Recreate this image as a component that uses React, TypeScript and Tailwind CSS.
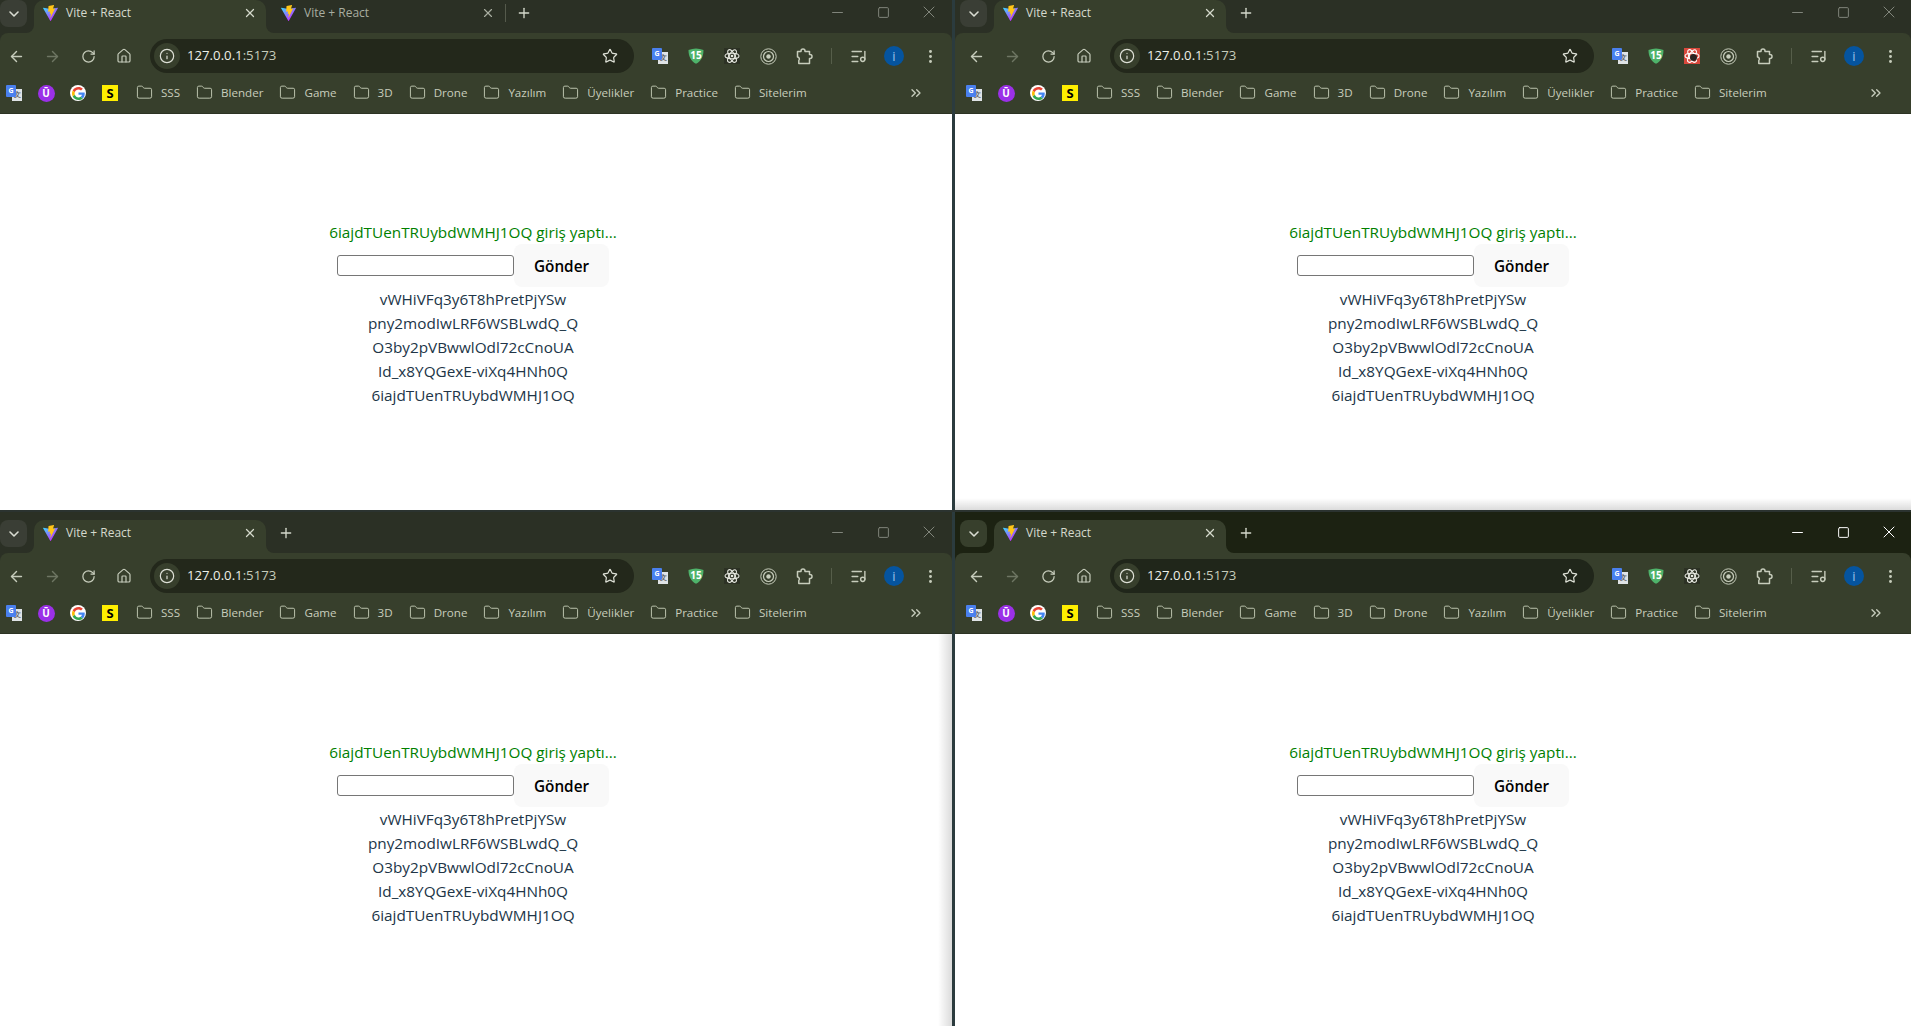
import React from 'react';
import {
    ArrowLeft,
    ArrowRight,
    ChevronDown,
    ChevronsRight,
    Folder,
    House,
    Info,
    ListMusic,
    Minus,
    MoreVertical,
    Plus,
    RotateCw,
    Square,
    Star,
    X,
} from 'lucide-react';

const bookmarks = ['SSS', 'Blender', 'Game', '3D', 'Drone', 'Yazılım', 'Üyelikler', 'Practice', 'Sitelerim'];
const users = [
    'vWHiVFq3y6T8hPretPjYSw',
    'pny2modIwLRF6WSBLwdQ_Q',
    'O3by2pVBwwlOdl72cCnoUA',
    'Id_x8YQGexE-viXq4HNh0Q',
    '6iajdTUenTRUybdWMHJ1OQ',
];

function ViteLogo() {
    return (
        <svg width="17" height="17" viewBox="0 0 32 32" fill="none">
            <defs>
                <linearGradient id="viteBody" x1="6" y1="4" x2="22" y2="26" gradientUnits="userSpaceOnUse">
                    <stop stopColor="#41D1FF" />
                    <stop offset="1" stopColor="#BD34FE" />
                </linearGradient>
            </defs>
            <path
                d="M29.8836 6.146L16.7418 29.6457c-.2714.4851-.9684.488-1.2439.0052L2.0956 6.1482c-.3-.5262.1498-1.1635.746-1.057l13.156 2.3516a.7144.7144 0 00.2537-.0004l12.8808-2.3478c.5942-.1083 1.0463.5241.7515 1.0514Z"
                fill="url(#viteBody)"
            />
            <path
                d="M22.2644.0069 12.5396 1.9123a.3571.3571 0 00-.2879.3294l-.5982 10.1032c-.0141.238.2045.4227.4367.3691l2.7076-.6248c.2533-.0585.4822.1647.4301.4194l-.8044 3.9393c-.0542.2651.1947.4918.4536.4131l1.6723-.5081c.2592-.0787.5084.1487.4536.414l-1.2784 6.1877c-.08.3871.4348.5982.6496.2664l.1434-.2215 7.9245-15.8147c.1327-.2648-.096-.5667-.3869-.5106l-2.787.5379c-.2619.0505-.4848-.1934-.4109-.4497l1.8191-6.3052c.0739-.2566-.1496-.5007-.4117-.4492Z"
                fill="#FFC517"
            />
        </svg>
    );
}

function GoogleLogo() {
    return (
        <div className="w-4 h-4 rounded-full bg-white flex items-center justify-center">
            <svg width="13" height="13" viewBox="0 0 48 48">
                <path fill="#EA4335" d="M24 9.5c3.54 0 6.71 1.22 9.21 3.6l6.85-6.85C35.9 2.38 30.47 0 24 0 14.62 0 6.51 5.38 2.56 13.22l7.98 6.19C12.43 13.72 17.74 9.5 24 9.5z" />
                <path fill="#4285F4" d="M46.98 24.55c0-1.57-.15-3.09-.38-4.55H24v9.02h12.94c-.58 2.96-2.26 5.48-4.78 7.18l7.73 6c4.51-4.18 7.09-10.36 7.09-17.65z" />
                <path fill="#FBBC05" d="M10.53 28.59c-.48-1.45-.76-2.99-.76-4.59s.27-3.14.76-4.59l-7.98-6.19C.92 16.46 0 20.12 0 24c0 3.88.92 7.54 2.56 10.78l7.97-6.19z" />
                <path fill="#34A853" d="M24 48c6.48 0 11.93-2.13 15.89-5.81l-7.73-6c-2.15 1.45-4.92 2.3-8.16 2.3-6.26 0-11.57-4.22-13.47-9.91l-7.98 6.19C6.51 42.62 14.62 48 24 48z" />
            </svg>
        </div>
    );
}

function TranslateIcon() {
    return (
        <div className="relative w-4 h-4">
            <div className="absolute right-0 bottom-0 w-[10px] h-[12px] bg-[#dfe3e6] text-[#5f6368] text-[7px] leading-[12px] text-center font-bold">文</div>
            <div className="absolute left-0 top-0 w-[10px] h-[12px] rounded-[1px] bg-[#4a80ee] text-white text-[7px] leading-[11px] text-center font-bold">G</div>
        </div>
    );
}

function ShieldIcon() {
    return (
        <div className="relative w-4 h-4 flex items-center justify-center">
            <svg className="absolute inset-0" width="16" height="16" viewBox="0 0 16 16">
                <path d="M8 0.5C10.5 0.5 13 1 15.5 2C15.5 8 13.5 13 8 15.8C2.5 13 0.5 8 0.5 2C3 1 5.5 0.5 8 0.5Z" fill="#4fb36b" />
            </svg>
            <span className="relative text-white text-[10px] font-bold leading-none -mt-[3px]">15</span>
        </div>
    );
}

function AtomGlyph({ color }: { color: string }) {
    return (
        <svg width="16" height="16" viewBox="0 0 16 16" fill="none" stroke={color} strokeWidth="1.1">
            <ellipse cx="8" cy="8" rx="7" ry="2.8" />
            <ellipse cx="8" cy="8" rx="7" ry="2.8" transform="rotate(60 8 8)" />
            <ellipse cx="8" cy="8" rx="7" ry="2.8" transform="rotate(120 8 8)" />
            <circle cx="8" cy="8" r="1.3" fill={color} stroke="none" />
        </svg>
    );
}

function AtomIcon({ alert }: { alert: boolean }) {
    if (alert) {
        return (
            <div className="relative w-4 h-4 bg-[#d8483c] flex items-center justify-center">
                <AtomGlyph color="#ffffff" />
                <div className="absolute right-[3px] bottom-[3px] w-[7px] h-[7px] rounded-full bg-[#2b2320]" />
            </div>
        );
    }
    return (
        <div className="w-4 h-4 bg-[#2c3124] flex items-center justify-center">
            <AtomGlyph color="#e6e8e0" />
        </div>
    );
}

function TargetIcon() {
    return (
        <svg width="17" height="17" viewBox="0 0 17 17" fill="none" stroke="#c6ccbb">
            <circle cx="8.5" cy="8.5" r="7.7" strokeWidth="1" />
            <circle cx="8.5" cy="8.5" r="5" strokeWidth="1.2" />
            <circle cx="8.5" cy="8.5" r="2" fill="#c6ccbb" strokeWidth="0.5" />
        </svg>
    );
}

function PuzzleIcon() {
    return (
        <svg width="17" height="17" viewBox="0 0 17 17" fill="none" stroke="#c6ccbb" strokeWidth="1.5" strokeLinejoin="round">
            <path d="M1.5 3.5H5V3a2 2 0 0 1 4 0V3.5H13.5V6.5H14a2 2 0 0 1 0 4H13.5V15.5H2.8V12.5a2 2 0 0 0-1.3-3.4V3.5Z" />
        </svg>
    );
}

function ToolButton({ children }: { children: React.ReactNode }) {
    return <div className="w-9 h-9 shrink-0 flex items-center justify-center text-[#c6ccbb]">{children}</div>;
}

function Flare({ side, focused }: { side: 'left' | 'right'; focused: boolean }) {
    return (
        <div className={side === 'left' ? 'absolute -left-2 bottom-0 w-2 h-2 bg-[#373f2c]' : 'absolute -right-2 bottom-0 w-2 h-2 bg-[#373f2c]'}>
            <div
                className={[
                    'w-full h-full',
                    side === 'left' ? 'rounded-br-lg' : 'rounded-bl-lg',
                    focused ? 'bg-[#1c2212]' : 'bg-[#2b3025]',
                ].join(' ')}
            />
        </div>
    );
}

function ActiveTab({ focused }: { focused: boolean }) {
    return (
        <div className="relative w-[232px] h-[33px] shrink-0 rounded-t-[10px] bg-[#373f2c] flex items-center pl-[8px] pr-[9px] pb-[7px]">
            <Flare side="left" focused={focused} />
            <Flare side="right" focused={focused} />
            <ViteLogo />
            <span className="ml-[7px] text-[12px] text-[#d5d9cc] flex-1">Vite + React</span>
            <X size={14} strokeWidth={2.2} className="text-[#d5d9cc]" />
        </div>
    );
}

function InactiveTab() {
    return (
        <div className="w-[239px] h-[33px] shrink-0 flex items-center pl-[14px] pr-[10px] pb-[7px]">
            <ViteLogo />
            <span className="ml-[7px] text-[12px] text-[#a8ada0] flex-1">Vite + React</span>
            <X size={14} strokeWidth={2} className="text-[#a8ada0]" />
        </div>
    );
}

type WindowProps = {
    clipped?: boolean;
    focused?: boolean;
    secondTab?: boolean;
    alertIcon?: boolean;
    right?: boolean;
};

function BrowserWindow({ clipped, focused = false, secondTab, alertIcon = false, right }: WindowProps) {
    const stripBg = focused ? 'bg-[#1c2212]' : 'bg-[#2b3025]';
    const omniBg = focused ? 'bg-[#20261a]' : 'bg-[#23281b]';
    const controls = focused ? 'text-white' : 'text-[#82867c]';

    return (
        <div className={right ? 'flex-1 h-full min-w-0 flex flex-col overflow-hidden bg-white' : 'w-[952px] shrink-0 h-full flex flex-col overflow-hidden bg-white'}>
            {/* tab strip */}
            <div className={[clipped ? 'h-[33px]' : 'h-[41px]', 'shrink-0 flex items-end', stripBg, right ? 'pl-[5px] pr-[3px]' : 'pr-[4px]'].join(' ')}>
                <div className="w-[34px] h-[33px] shrink-0 self-end flex items-start">
                    <div className={focused ? 'w-[27px] h-[27px] rounded-lg bg-[#373f2c] flex items-center justify-center' : 'w-[27px] h-[27px] rounded-lg bg-[#3a3e35] flex items-center justify-center'}>
                        <ChevronDown size={16} strokeWidth={2.4} className="text-[#d9dcd2]" />
                    </div>
                </div>
                <ActiveTab focused={focused} />
                {secondTab && <InactiveTab />}
                {secondTab && <div className="w-px h-[18px] mb-[11px] bg-[#555a4c]" />}
                <div className={secondTab ? 'w-[36px] h-[33px] pb-[7px] flex items-center justify-center' : 'w-[36px] ml-[2px] h-[33px] pb-[7px] flex items-center justify-center'}>
                    <Plus size={16} strokeWidth={2} className="text-[#d5d9cc]" />
                </div>
                <div className={['ml-auto -mr-[4px] h-[33px] pb-[9px] flex items-center', controls].join(' ')}>
                    <div className="w-[46px] flex justify-center"><Minus size={17} strokeWidth={1.4} /></div>
                    <div className="w-[46px] flex justify-center"><Square size={13} strokeWidth={1.8} /></div>
                    <div className="w-[46px] flex justify-center"><X size={20} strokeWidth={1.2} /></div>
                </div>
            </div>

            {/* toolbar + bookmarks */}
            <div className={[stripBg, 'shrink-0'].join(' ')}>
                <div className={['h-[81px] bg-[#373f2c] rounded-t-[8px] border-b border-[#2c3323]', right ? 'pl-[5px] pr-[3px]' : 'pr-[4px]'].join(' ')}>
                    <div className="h-[46px] flex items-center -ml-[2px]">
                        <ToolButton><ArrowLeft size={17} strokeWidth={2} /></ToolButton>
                        <ToolButton><ArrowRight size={17} strokeWidth={2} className="text-[#6e7663]" /></ToolButton>
                        <ToolButton><RotateCw size={15} strokeWidth={2} /></ToolButton>
                        <ToolButton><House size={16} strokeWidth={1.8} /></ToolButton>
                        <div className={['ml-[8px] flex-1 h-[34px] rounded-full flex items-center pl-[4px]', omniBg].join(' ')}>
                            <div className="w-[26px] h-[26px] rounded-full bg-[#373f2c] flex items-center justify-center">
                                <Info size={16} strokeWidth={1.8} className="text-[#dde0d6]" />
                            </div>
                            <span className="ml-[7px] text-[13.2px] text-[#eef0e8]">127.0.0.1<span className="text-[#c6ccbb]">:5173</span></span>
                            <Star size={16} strokeWidth={1.8} className="ml-auto mr-[16px] text-[#dde0d6]" />
                        </div>
                        <div className="w-[8px] shrink-0" />
                        <ToolButton><TranslateIcon /></ToolButton>
                        <ToolButton><ShieldIcon /></ToolButton>
                        <ToolButton><AtomIcon alert={alertIcon} /></ToolButton>
                        <ToolButton><TargetIcon /></ToolButton>
                        <ToolButton><PuzzleIcon /></ToolButton>
                        <div className="w-px h-[16px] ml-[9px] mr-[8px] bg-[#565e4a]" />
                        <ToolButton><ListMusic size={17} strokeWidth={2} /></ToolButton>
                        <ToolButton>
                            <div className="w-5 h-5 rounded-full bg-[#05549f] text-[#9cc3e8] text-[13px] leading-5 text-center">i</div>
                        </ToolButton>
                        <ToolButton><MoreVertical size={17} strokeWidth={2.2} /></ToolButton>
                    </div>
                    <div className="h-[34px] flex items-center -mt-[3px]">
                        <div className="w-[30px] shrink-0 pl-[6px]"><TranslateIcon /></div>
                        <div className="w-[32px] shrink-0 flex justify-center">
                            <div className="w-[17px] h-[17px] rounded-full bg-[#9b30e8] text-white text-[10px] font-bold leading-[17px] text-center">Ū</div>
                        </div>
                        <div className="w-[32px] shrink-0 flex justify-center"><GoogleLogo /></div>
                        <div className="w-[32px] shrink-0 flex justify-center">
                            <div className="w-4 h-4 bg-[#ffee00] text-black text-[13px] font-bold leading-4 text-center">S</div>
                        </div>
                        <div className="w-[10px] shrink-0" />
                        {bookmarks.map((name) => (
                            <div key={name} className="flex items-center shrink-0 mr-[16px]">
                                <Folder size={17} strokeWidth={1.4} className="text-[#bcc4ae]" />
                                <span className="ml-[8px] text-[11.6px] text-[#c8cdbc]">{name}</span>
                            </div>
                        ))}
                        <div className="ml-auto mr-[24px]">
                            <ChevronsRight size={16} strokeWidth={2} className="text-[#c6ccbb]" />
                        </div>
                    </div>
                </div>
            </div>

            {/* page */}
            <div className={right ? 'flex-1 pl-[5px]' : 'flex-1'}>
                <div className="w-[946px] pt-[106px] flex flex-col items-center text-[15.3px] leading-6 text-[#213547]">
                    <p className="text-[#008000]">6iajdTUenTRUybdWMHJ1OQ giriş yaptı...</p>
                    <form className="flex items-center" onSubmit={(e) => e.preventDefault()}>
                        <input type="text" className="w-[177px] h-[21px] border border-[#767676] rounded-[3px] bg-white" />
                        <button type="button" className="w-[95px] h-[43px] rounded-lg bg-[#f9f9f9] font-semibold text-black">Gönder</button>
                    </form>
                    <ul>
                        {users.map((u) => (
                            <li key={u} className="text-center">{u}</li>
                        ))}
                    </ul>
                </div>
            </div>
        </div>
    );
}

export default function App() {
    return (
        <div className="relative h-screen w-full flex flex-col bg-[#2b3b3e] overflow-hidden font-['Open_Sans','Noto_Sans',sans-serif]">
            <div className="h-[510px] shrink-0 flex">
                <BrowserWindow clipped secondTab />
                <div className="w-[3px] shrink-0 bg-[#2b3b3e]" />
                <BrowserWindow clipped right alertIcon />
            </div>
            <div className="h-[2px] shrink-0 bg-[#2b3330]" />
            <div className="flex-1 min-h-0 flex">
                <BrowserWindow />
                <div className="w-[3px] shrink-0 bg-[#2b3b3e]" />
                <BrowserWindow right focused />
            </div>
            {/* drop shadow cast by the focused window */}
            <div className="absolute left-[955px] right-0 top-[498px] h-[12px] bg-gradient-to-b from-transparent to-[#00000024]" />
            <div className="absolute left-[938px] w-[14px] top-[634px] bottom-0 bg-gradient-to-r from-transparent to-[#00000024]" />
        </div>
    );
}
